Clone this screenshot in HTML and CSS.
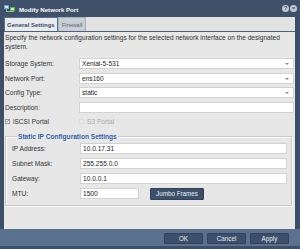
FILE: index.html
```html
<!DOCTYPE html>
<html>
<head>
<meta charset="utf-8">
<link rel="stylesheet" href="styles.css">
</head>
<body>
<div class="win">
  <div class="titlebar">
    <svg class="appicon" width="12" height="9" viewBox="0 0 12 9">
      <rect x="0" y="1" width="5" height="4" fill="#6fa8dc"/>
      <rect x="1" y="2" width="3" height="2" fill="#cfe3f5"/>
      <rect x="2" y="5" width="1" height="2" fill="#6fa8dc"/>
      <rect x="2" y="7" width="8" height="1" fill="#8fc46a"/>
      <rect x="6" y="3" width="5" height="4" fill="#5fb04a"/>
      <rect x="7" y="4" width="3" height="2" fill="#c9e8b8"/>
    </svg>
    <span class="title">Modify Network Port</span>
    <div class="tools">
      <span class="tool">?</span>
      <span class="tool">×</span>
    </div>
  </div>
  <div class="main">
    <div class="tabs">
      <div class="tab active">General Settings</div>
      <div class="tab">Firewall</div>
    </div>
    <div class="panel">
      <p class="desc">Specify the network configuration settings for the selected network interface on the designated system.</p>
      <div class="form">
        <label class="lbl">Storage System:</label>
        <div class="inp select">Xenial-5-531<span class="arrow"></span></div>
        <label class="lbl">Network Port:</label>
        <div class="inp select">ens160<span class="arrow"></span></div>
        <label class="lbl">Config Type:</label>
        <div class="inp select">static<span class="arrow"></span></div>
        <label class="lbl">Description:</label>
        <div class="inp"></div>
      </div>
      <div class="checks">
        <div class="check"><span class="box on"><svg width="5" height="5" viewBox="0 0 5 5"><path d="M0.6 2.6 L2 4 L4.6 0.6" fill="none" stroke="#222" stroke-width="0.9"/></svg></span>iSCSI Portal</div>
        <div class="check disabled"><span class="box"></span>S3 Portal</div>
      </div>
      <fieldset class="group">
        <legend>Static IP Configuration Settings</legend>
        <div class="gform">
          <label class="lbl">IP Address:</label>
          <div class="inp">10.0.17.31</div>
          <label class="lbl">Subnet Mask:</label>
          <div class="inp">255.255.0.0</div>
          <label class="lbl">Gateway:</label>
          <div class="inp">10.0.0.1</div>
          <label class="lbl">MTU:</label>
          <div class="mturow">
            <div class="inp mtu">1500</div>
            <button class="btn jumbo">Jumbo Frames</button>
          </div>
        </div>
      </fieldset>
    </div>
  </div>
  <div class="footer">
    <button class="btn fbtn">OK</button>
    <button class="btn fbtn">Cancel</button>
    <button class="btn fbtn">Apply</button>
  </div>
</div>
</body>
</html>
```
FILE: styles.css
```css
* { box-sizing: border-box; }
html, body { margin: 0; padding: 0; }
body {
  width: 300px;
  height: 249px;
  overflow: hidden;
  font-family: "Liberation Sans", Arial, sans-serif;
  font-size: 6.6px;
  color: #333;
  background: #3e5068;
}
.win {
  width: 300px;
  height: 249px;
  background: #3e5068;
  display: flex;
  flex-direction: column;
}
.titlebar {
  height: 17px;
  display: flex;
  align-items: center;
  padding: 0 3px 0 4px;
  color: #fff;
  background: #3f5169;
}
.appicon { margin-right: 3px; }
.title {
  font-weight: bold;
  font-size: 6.1px;
  flex: 1;
  padding-top: 1px;
}
.tools { display: flex; gap: 1px; }
.tool {
  width: 7px;
  height: 7px;
  border-radius: 50%;
  background: #c3cad3;
  color: #3f5169;
  font-size: 6px;
  font-weight: bold;
  line-height: 7px;
  text-align: center;
}
.main {
  margin: 0 5px 0 4px;
  height: 212px;
  display: flex;
  flex-direction: column;
  background: #e7e7e7;
}
.tabs {
  height: 15px;
  display: flex;
  align-items: flex-end;
  background: #e2e2e2;
  border-bottom: 1px solid #4b6079;
}
.tab {
  height: 14px;
  padding: 0 3px;
  display: flex;
  align-items: center;
  white-space: nowrap;
  font-size: 6px;
  color: #666;
  background: #c8ced6;
  border: 1px solid #a7b1bd;
  border-bottom: none;
}
.tab.active {
  padding: 0 2px;
  font-weight: bold;
  background: #e9ebee;
  color: #3a4e66;
  border-color: #5e718a;
}
.panel {
  flex: 1;
  padding: 2px 1px 0 1px;
  background: #e7e7e7;
}
.desc {
  margin: 0;
  line-height: 8.5px;
  color: #333;
}
.form {
  margin-top: 7px;
  display: grid;
  grid-template-columns: 74px 1fr;
  row-gap: 3.67px;
  align-items: center;
}
.inp {
  height: 11px;
  background: #fff;
  border: 1px solid #d2d2d2;
  padding: 0 2px;
  line-height: 9px;
  color: #222;
  position: relative;
}
.select .arrow {
  position: absolute;
  right: 4px;
  top: 4px;
  width: 0;
  height: 0;
  border-left: 2px solid transparent;
  border-right: 2px solid transparent;
  border-top: 2px solid #888;
}
.checks {
  display: grid;
  grid-template-columns: 74px 1fr;
  height: 11px;
  margin-top: 3px;
  align-items: center;
}
.check { display: flex; align-items: center; }
.check.disabled { color: #aaa; }
.box {
  width: 5px;
  height: 5px;
  margin-right: 3px;
  border: 1px solid #9a9a9a;
  background: #fff;
  display: inline-flex;
  align-items: center;
  justify-content: center;
}
.box.on svg { width: 4px; height: 4px; }
.check.disabled .box { border-color: #ddd; background: #ececec; }
.group {
  margin: 6px 2px 0 0;
  padding: 3px 4px 5px 6px;
  border: 1px solid #cacaca;
  box-shadow: inset 1px 1px 0 #fafafa, 1px 1px 0 #fafafa;
  min-width: 0;
}
.group legend {
  color: #2c5ea6;
  font-weight: bold;
  padding: 0 1px;
  margin-left: 5px;
}
.gform {
  display: grid;
  grid-template-columns: 68px 1fr;
  row-gap: 4px;
  align-items: center;
}
.mturow { display: flex; align-items: center; gap: 11px; }
.mtu { width: 59px; }
.btn {
  font-family: "Liberation Sans", Arial, sans-serif;
  font-size: 6.3px;
  color: #e6ebf1;
  background: #3d5069;
  border: 1px solid #31425a;
  border-radius: 1px;
  padding: 0;
  margin: 0;
}
.jumbo { width: 54px; height: 12px; }
.footer {
  height: 17px;
  margin-bottom: 3px;
  background: #5a7290;
  display: flex;
  justify-content: flex-end;
  align-items: center;
  gap: 4px;
  padding-right: 11px;
  padding-top: 1px;
}
.fbtn { width: 39px; height: 11px; }
```
